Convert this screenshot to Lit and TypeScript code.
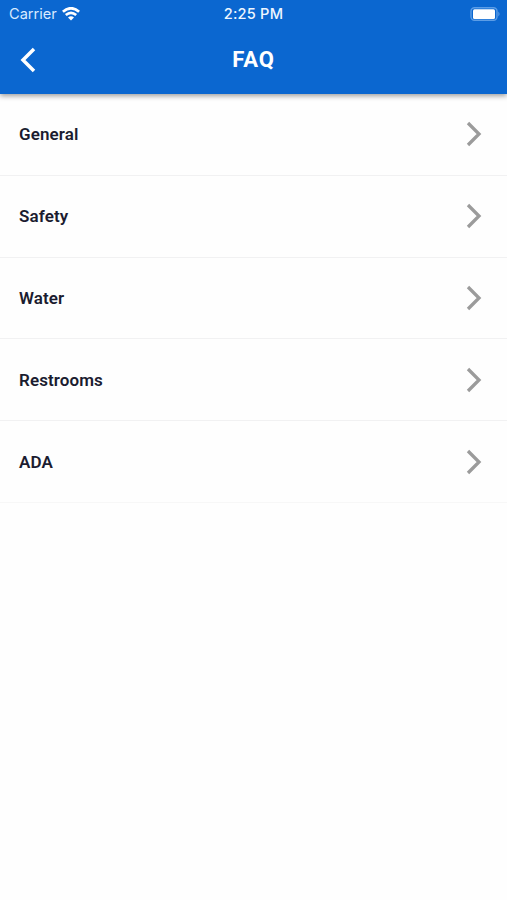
import { LitElement, html, css } from "lit";
import { customElement } from "lit/decorators.js";

const topics = ["General", "Safety", "Water", "Restrooms", "ADA"];

@customElement("app-root")
class AppRoot extends LitElement {
  static styles = css`
    :host { display: block; height: 900px; background: #fefefe; font-family: Roboto, sans-serif; overflow: hidden; }
    header { height: 94px; background: #0b67d0; color: #fff; box-shadow: 0 2px 5px rgba(0,0,0,.38); }
    .status { height: 27px; display: grid; grid-template-columns: 1fr auto 1fr; align-items: center; padding: 0 7px; font: 14.6px/27px Inter, sans-serif; }
    .status span { padding-top: 1px; }
    .carrier { display: flex; align-items: center; gap: 5px; padding-left: 2px; color: #d9eaff; }
    .carrier svg, .battery { margin-bottom: 1px; }
    .time { font-weight: 500; color: #eef6ff; letter-spacing: .2px; }
    .battery { justify-self: end; }
    .nav { height: 66px; display: grid; grid-template-columns: 56px 1fr 56px; align-items: center; }
    .back { justify-self: center; }
    h1 { margin: 0; text-align: center; font: 700 22px/30px Roboto, sans-serif; letter-spacing: .9px; }
    .row { box-sizing: border-box; height: 81.8px; padding: 0 25px 0 19px; display: flex; align-items: center; justify-content: space-between; border-bottom: 1px solid #f1f1f2; color: #1b1c30; font-size: 17px; font-weight: 600; letter-spacing: .1px; }
    .row:last-child { border-color: #f7f7f7; }
    svg { display: block; fill: none; }
  `;
  render() {
    return html`
      <header>
        <div class="status">
          <div class="carrier"><span>Carrier</span>
            <svg width="18" height="14" viewBox="0 0 18 14" stroke="#fff" stroke-width="2.7"><path d="M.9 4.8Q9-2.3 17.1 4.8M3.8 8Q9 3.6 14.2 8"/><path d="M6 10.5Q9 8 12 10.5L9 13.5Z" fill="#fff" stroke="none"/></svg>
          </div>
          <span class="time">2:25 PM</span>
          <svg class="battery" width="30" height="14" viewBox="0 0 30 14"><rect x="1" y=".7" width="26" height="12.6" rx="3.5" stroke="#5c9de6" stroke-width="1.4"/><rect x="3" y="2.3" width="22" height="9.6" rx="1.5" fill="#fff"/><path d="M28.3 4.5q2.6 2.5 0 5z" fill="#5c9de6"/></svg>
        </div>
        <div class="nav">
          <svg class="back" width="16" height="26" viewBox="0 0 16 26" stroke="#fff" stroke-width="3.5"><path d="M14 2L3 13L14 24"/></svg>
          <h1>FAQ</h1>
        </div>
      </header>
      <main>${topics.map((t) => html`<div class="row"><span>${t}</span><svg width="16" height="26" viewBox="0 0 16 26" stroke="#9b9b9b" stroke-width="3.3"><path d="M2 2L13 13L2 24"/></svg></div>`)}</main>`;
  }
}
